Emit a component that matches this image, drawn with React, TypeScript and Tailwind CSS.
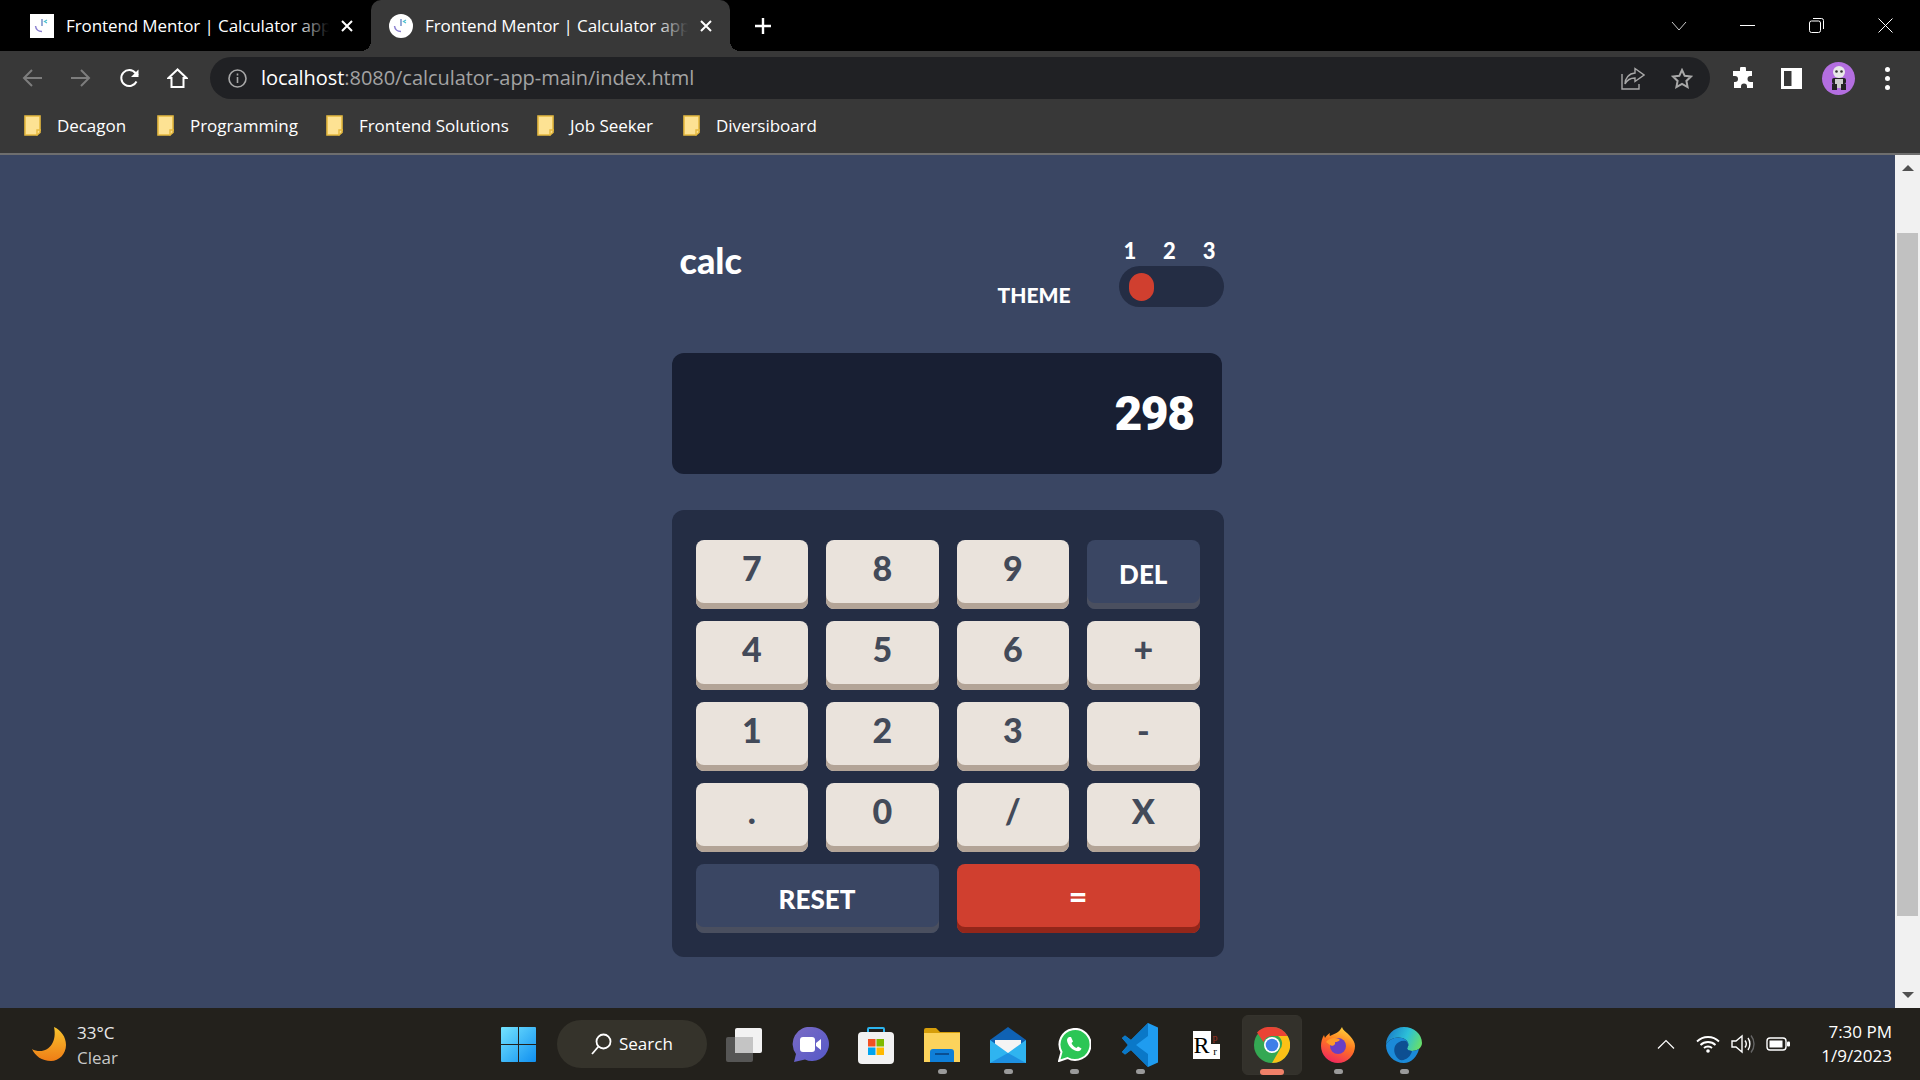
import { ReactNode } from "react";

const uiFont = "font-['Open_Sans','Noto_Sans',sans-serif]";
const calcFont = "font-['Lato',sans-serif]";

const keys = ["7", "8", "9", "DEL", "4", "5", "6", "+", "1", "2", "3", "-", ".", "0", "/", "X"];
const bookmarks = [
  { name: "Decagon", width: "w-[133px]" },
  { name: "Programming", width: "w-[169px]" },
  { name: "Frontend Solutions", width: "w-[211px]" },
  { name: "Job Seeker", width: "w-[146px]" },
  { name: "Diversiboard", width: "w-[160px]" },
];

function Favicon({ round }: { round?: boolean }) {
  return (
    <div className={`flex h-6 w-6 shrink-0 items-center justify-center bg-white ${round ? "rounded-full" : ""}`}>
      <svg width="18" height="18" viewBox="0 0 18 18" fill="none">
        <path d="M9 2v7" stroke="#5f7fc0" strokeWidth="1.3" />
        <path d="M14 3 11.500 4.500 14 6" stroke="#4cc0d0" strokeWidth="1.2" />
        <path d="M2.500 9c.5 3.500 3 5.500 6.500 5.500" stroke="#8a7fd0" strokeWidth="1.5" />
      </svg>
    </div>
  );
}

function Tab({ active }: { active?: boolean }) {
  return (
    <div className={`relative flex h-[51px] items-center ${active ? "w-[359px] rounded-t-[10px] bg-[#383838] pl-[18px]" : "w-[371px] pl-[30px]"}`}>
      {active && (
        <>
          <div className="absolute bottom-0 left-[-10px] h-2.5 w-2.5 bg-[radial-gradient(circle_at_0_0,#000_10px,#383838_10px)]" />
          <div className="absolute bottom-0 right-[-10px] h-2.5 w-2.5 bg-[radial-gradient(circle_at_100%_0,#000_10px,#383838_10px)]" />
        </>
      )}
      <Favicon round={active} />
      <div className="relative ml-3 w-[263px] overflow-hidden whitespace-nowrap text-[17px] tracking-[-0.1px] text-white">
        Frontend Mentor | Calculator app
        <div className={`absolute inset-y-0 right-0 w-8 bg-gradient-to-r from-transparent ${active ? "to-[#383838]" : "to-black"}`} />
      </div>
      <svg className="ml-[12px]" width="12" height="12" viewBox="0 0 12 12" stroke="white" strokeWidth="2">
        <path d="M1 1l10 10M11 1 1 11" />
      </svg>
    </div>
  );
}

function Folder() {
  return (
    <svg className="shrink-0" width="18" height="21" viewBox="0 0 18 21">
      <path d="M1 1h15v16.500l-3 2.500H1z" fill="#fde293" stroke="#e5b93f" strokeWidth="1.6" />
      <path d="M17 15h-4v5.500" fill="none" stroke="#e5b93f" strokeWidth="1.4" />
    </svg>
  );
}

function CalcKey({ label }: { label: string }) {
  const dark = label === "DEL";
  return (
    <button
      className={`flex h-[69px] justify-center rounded-lg font-black ${
        dark
          ? "items-center bg-[#3a4663] pt-1 pb-1 text-[26px] text-white shadow-[inset_0_-6px_0_#4a4f5f]"
          : "bg-[#eae3dc] pt-[4px] text-[34px] leading-[48px] text-[#434a59] shadow-[inset_0_-6px_0_#b3a497]"
      }`}
    >
      {label}
    </button>
  );
}

function TaskSlot({ children, dot, active }: { children: ReactNode; dot?: boolean; active?: boolean }) {
  return (
    <div className="relative flex h-full w-[66px] items-center justify-center pt-[2px]">
      {active && <div className="absolute inset-x-[3px] top-[7px] h-[60px] rounded-md border border-[#35332d] bg-[#33312b]" />}
      <div className="relative flex">{children}</div>
      {dot && <div className="absolute bottom-[6px] left-[28.500px] h-[5px] w-[9px] rounded-full bg-[#9a9a9a]" />}
      {active && <div className="absolute bottom-[5px] left-[21px] h-[6px] w-6 rounded-full bg-[#f08068]" />}
    </div>
  );
}

export default function App() {
  return (
    <div className={`flex h-screen w-full flex-col overflow-hidden bg-[#3a4663] ${uiFont}`}>
      {/* browser chrome */}
      <div className="flex h-[51px] shrink-0 items-center bg-black">
        <Tab />
        <Tab active />
        <svg className="ml-[24px]" width="18" height="18" viewBox="0 0 18 18" stroke="white" strokeWidth="2.400">
          <path d="M9 1v16M1 9h16" />
        </svg>
        <div className="ml-auto flex items-center">
          <svg width="16" height="10" viewBox="0 0 16 10" fill="none" stroke="#ccc" strokeWidth="1">
            <path d="M1 1l7 8 7-8" />
          </svg>
          <div className="ml-[53px] h-px w-[15px] bg-white" />
          <svg className="ml-[54px]" width="15" height="15" viewBox="0 0 15 15" fill="none" stroke="white" strokeWidth="1">
            <rect x="0.500" y="3" width="11" height="11.500" rx="2" />
            <path d="M4 .5h8.500a2 2 0 0 1 2 2V11" />
          </svg>
          <svg className="ml-[54px] mr-[27px]" width="15" height="15" viewBox="0 0 15 15" stroke="white" strokeWidth="1">
            <path d="M.5.5l14 14M14.500.5l-14 14" />
          </svg>
        </div>
      </div>

      <div className="flex h-[51px] shrink-0 items-center bg-[#383838] pt-[3px]">
        <div className="flex w-[210px] items-center pl-[22px]">
          <svg width="21" height="20" viewBox="0 0 21 20" fill="none" stroke="#7d7d7d" strokeWidth="2">
            <path d="M20 10H2M10 2l-8 8 8 8" />
          </svg>
          <svg className="ml-[27px]" width="21" height="20" viewBox="0 0 21 20" fill="none" stroke="#7d7d7d" strokeWidth="2">
            <path d="M1 10h18M11 2l8 8-8 8" />
          </svg>
          <svg className="ml-[28px]" width="21" height="21" viewBox="0 0 21 21" fill="none" stroke="white" strokeWidth="2">
            <path d="M17.500 13.500A8 8 0 1 1 16.500 5L19 7" />
            <path d="M19.500 1.500v7.500H12" fill="white" stroke="none" />
          </svg>
          <svg className="ml-[27px]" width="21" height="20" viewBox="0 0 21 20" fill="none" stroke="white" strokeWidth="2">
            <path d="M10.500 1.500 1.500 10H4.500v9h12v-9h3z" />
          </svg>
        </div>
        <div className="flex h-[42px] w-[1500px] items-center rounded-full bg-[#202124] pl-[18px]">
          <svg width="19" height="19" viewBox="0 0 19 19" fill="none" stroke="#a8a8a8" strokeWidth="1.600">
            <circle cx="9.500" cy="9.500" r="8.500" />
            <path d="M9.500 8v6M9.500 4.500v2" />
          </svg>
          <div className="ml-[14px] whitespace-nowrap text-[20px] tracking-[-0.05px] text-[#a3a3a3]">
            <span className="text-white">localhost</span>:8080/calculator-app-main/index.html
          </div>
          <svg className="ml-auto" width="24" height="23" viewBox="0 0 24 23" fill="none" stroke="#a8a8a8" strokeWidth="1.400">
            <path d="M1 7v15h17v-5" />
            <path d="M14 1.500 23 8l-9 6.500V11C9 11 6 13 4 17c0-6 4-10.500 10-11z" />
          </svg>
          <svg className="ml-[26px] mr-[17px]" width="22" height="21" viewBox="0 0 22 21" fill="none" stroke="#a8a8a8" strokeWidth="2">
            <path d="M11 2l2.700 5.800 6.300.8-4.600 4.300 1.200 6.200L11 16l-5.600 3.100 1.200-6.200L2 8.600l6.300-.8z" />
          </svg>
        </div>
        <svg className="ml-[22px]" width="22" height="22" viewBox="0 0 22 22" fill="white">
          <path d="M8 2a3 3 0 0 1 6 0v2h6v5h-1.500a3 3 0 0 0 0 6H21v6h-6v-1.500a3 3 0 0 0-6 0V21H2v-6h1a3 3 0 0 0 0-6H1V4h7z" />
        </svg>
        <svg className="ml-[27px]" width="21" height="21" viewBox="0 0 21 21" fill="none" stroke="white" strokeWidth="3">
          <rect x="1.500" y="1.500" width="18" height="18" />
          <path d="M15 1v19" strokeWidth="9" />
        </svg>
        <div className="ml-[20px] flex h-[33px] w-[33px] items-center justify-center rounded-full bg-[#b36ee0]">
          <svg width="20" height="26" viewBox="0 0 20 26">
            <circle cx="10" cy="7" r="6" fill="#e8e8e8" />
            <circle cx="7.500" cy="6.500" r="1.300" fill="#333" />
            <circle cx="12.500" cy="6.500" r="1.300" fill="#333" />
            <rect x="3" y="13" width="14" height="6" rx="2" fill="#222" />
            <rect x="6" y="14" width="8" height="9" fill="#ccc" />
            <rect x="3" y="19" width="5" height="6" fill="#222" />
            <rect x="12" y="19" width="5" height="6" fill="#222" />
          </svg>
        </div>
        <div className="ml-[30px] flex flex-col gap-[4px]">
          <div className="h-[5px] w-[5px] rounded-full bg-white" />
          <div className="h-[5px] w-[5px] rounded-full bg-white" />
          <div className="h-[5px] w-[5px] rounded-full bg-white" />
        </div>
      </div>

      <div className="flex h-[51px] shrink-0 items-center bg-[#383838] pb-[4px] pl-6">
        {bookmarks.map((b) => (
          <div key={b.name} className={`flex items-center ${b.width}`}>
            <Folder />
            <span className="ml-[15px] whitespace-nowrap text-[17px] tracking-[-0.05px] text-white">{b.name}</span>
          </div>
        ))}
      </div>
      <div className="h-0.5 shrink-0 bg-[#6e6e6e]" />

      {/* page */}
      <div className="flex min-h-0 flex-1">
        <main className={`min-w-0 flex-1 pt-[85px] ${calcFont}`}>
          <div className="mx-auto w-[552px]">
            <div className="flex items-start justify-between">
              <div className="ml-[8px] mt-[-4px] text-[36px] font-black leading-[48px] text-white">calc</div>
              <div className="flex items-end">
                <div className="mb-px mr-[48px] text-[21px] font-black leading-[22px] text-white">THEME</div>
                <div className="w-[105px]">
                  <div className="flex h-[26px] justify-between pl-[5px] pr-[8px] text-[22px] font-black leading-[22px] text-white">
                    <span>1</span>
                    <span>2</span>
                    <span>3</span>
                  </div>
                  <div className="flex h-[41px] items-center rounded-full bg-[#242d44] pl-2.5">
                    <div className="h-7 w-[25px] rounded-full bg-[#d03f2f]" />
                  </div>
                </div>
              </div>
            </div>

            <div className="mt-[46px] flex h-[121px] w-[550px] items-center justify-end rounded-[12px] bg-[#181f33] pr-7">
              <span className="font-['Roboto',sans-serif] text-[48px] font-black tracking-[-1.5px] text-white">298</span>
            </div>

            <div className="mt-9 rounded-[12px] bg-[#242d44] px-6 pb-6 pt-[30px]">
              <div className="grid grid-cols-4 gap-x-[18px] gap-y-3">
                {keys.map((k) => (
                  <CalcKey key={k} label={k} />
                ))}
                <button className="col-span-2 flex h-[69px] items-center justify-center rounded-lg bg-[#3a4663] pt-0.5 text-[26px] font-black text-white shadow-[inset_0_-6px_0_#4a4f5f]">
                  RESET
                </button>
                <button className="col-span-2 flex h-[69px] items-center justify-center rounded-lg bg-[#d03f2f] pb-1.5 text-[32px] font-black text-white shadow-[inset_0_-6px_0_#93261a]">
                  =
                </button>
              </div>
            </div>
          </div>
        </main>

        <div className="flex w-[25px] shrink-0 flex-col items-center bg-[#f1f1f1]">
          <div className="mt-[10px] h-0 w-0 border-x-[6px] border-b-[6px] border-x-transparent border-b-[#505050]" />
          <div className="mt-[62px] h-[683px] w-[21px] bg-[#c1c1c1]" />
          <div className="mt-[76px] h-0 w-0 border-x-[6px] border-t-[6px] border-x-transparent border-t-[#505050]" />
        </div>
      </div>

      {/* windows taskbar */}
      <div className="flex h-[72px] shrink-0 items-center bg-[#23211c]">
        <div className="flex w-[501px] items-center pl-8">
          <svg width="34" height="34" viewBox="0 0 34 34">
            <defs>
              <linearGradient id="moon" x1="0" y1="0" x2="0" y2="1">
                <stop offset="0" stopColor="#f8c42e" />
                <stop offset="1" stopColor="#ee7d16" />
              </linearGradient>
            </defs>
            <path d="M22 0c7 3 12 10 12 18 0 9-7 16-15 16C10 34 3 29 0 22c2 1.500 5 2 8 2 10 0 17-10 14-24z" fill="url(#moon)" />
          </svg>
          <div className="ml-[11px] pt-[2px] text-[17px] leading-[25px] text-[#e8e8e8]">
            <div>33°C</div>
            <div className="text-[#c8c8c8]">Clear</div>
          </div>
        </div>

        <svg width="35" height="35" viewBox="0 0 35 35">
          <defs>
            <linearGradient id="win" x1="0" y1="0" x2="1" y2="1">
              <stop offset="0" stopColor="#74e4ff" />
              <stop offset="1" stopColor="#0f8ff0" />
            </linearGradient>
          </defs>
          <path d="M0 1a1 1 0 0 1 1-1h16v17H0zM18 0h16a1 1 0 0 1 1 1v16H18zM0 18h17v17H1a1 1 0 0 1-1-1zM18 18h17v16a1 1 0 0 1-1 1H18z" fill="url(#win)" />
        </svg>

        <div className="ml-[21px] flex h-12 w-[150px] items-center rounded-full bg-[#35332b] pl-[34px] text-[17px] text-white">
          <svg width="21" height="22" viewBox="0 0 21 22" fill="none" stroke="white" strokeWidth="1.800">
            <circle cx="12.500" cy="8.500" r="7" />
            <path d="M7.500 13.500 1 21" />
          </svg>
          <span className="ml-[7px]">Search</span>
        </div>

        <div className="ml-1 flex h-full">
          <TaskSlot>
            <svg width="36" height="34" viewBox="0 0 36 34">
              <rect x="9" y="0" width="27" height="25" rx="2" fill="#f2f2f2" />
              <rect x="0" y="9" width="27" height="25" rx="2" fill="#5c5c5c" fillOpacity="0.9" />
              <rect x="9" y="9" width="18" height="16" fill="#c4c4c4" />
            </svg>
          </TaskSlot>
          <TaskSlot>
            <svg width="38" height="36" viewBox="0 0 38 36">
              <defs>
                <linearGradient id="chat" x1="0" y1="0" x2="1" y2="1">
                  <stop offset="0" stopColor="#7a6bc4" />
                  <stop offset="1" stopColor="#5558c8" />
                </linearGradient>
              </defs>
              <path d="M21 0a17 17 0 1 1-7 32.500L3 35l2-8A17 17 0 0 1 21 0z" fill="url(#chat)" />
              <rect x="9" y="10" width="15" height="15" rx="3" fill="white" />
              <path d="M25 16l5-4v11l-5-4z" fill="white" />
            </svg>
          </TaskSlot>
          <TaskSlot>
            <svg width="36" height="37" viewBox="0 0 36 37">
              <path d="M10 6V2a1 1 0 0 1 1-1h14a1 1 0 0 1 1 1v4" fill="none" stroke="#2bb4ee" strokeWidth="2" />
              <rect x="0" y="5" width="36" height="32" rx="4" fill="#f2f2f2" />
              <rect x="10" y="12" width="7.500" height="7.500" fill="#f25022" />
              <rect x="18.500" y="12" width="7.500" height="7.500" fill="#7fba00" />
              <rect x="10" y="20.500" width="7.500" height="7.500" fill="#00a4ef" />
              <rect x="18.500" y="20.500" width="7.500" height="7.500" fill="#ffb900" />
            </svg>
          </TaskSlot>
          <TaskSlot dot>
            <svg width="36" height="34" viewBox="0 0 36 34">
              <path d="M0 2a2 2 0 0 1 2-2h10l4 4h20v8H0z" fill="#d69e0a" />
              <path d="M0 5h36v29H0z" fill="#fcd35c" />
              <path d="M6 34V24a3 3 0 0 1 3-3h18a3 3 0 0 1 3 3v10z" fill="#0f7fd8" />
              <rect x="11" y="25" width="14" height="2" fill="#0a4f92" />
            </svg>
          </TaskSlot>
          <TaskSlot dot>
            <svg width="36" height="36" viewBox="0 0 36 36">
              <path d="M18 0 36 13v23H0V13z" fill="#0f62b4" />
              <path d="M5 13h26v6l-13 9L5 19z" fill="#f4f4f4" />
              <path d="M0 13l18 13 18-13v23H0z" fill="#2fb4f0" />
              <path d="M0 36l18-10 18 10z" fill="#1e90e0" />
            </svg>
          </TaskSlot>
          <TaskSlot dot>
            <svg width="33" height="34" viewBox="0 0 33 34">
              <path d="M1 33l2.500-9A15.500 15.500 0 1 1 9.500 30z" fill="#2bc655" stroke="white" strokeWidth="2" />
              <path d="M11 9c-2 1-2.500 3-1.500 5.500 1.500 4 5 7.500 9 8.500 2.500.5 4.500-.5 5-2.500l-3.500-2-1.500 1.500c-2-.5-4.500-3-5-5l1.500-1.500-2-4.500z" fill="white" />
            </svg>
          </TaskSlot>
          <TaskSlot dot>
            <svg width="36" height="44" viewBox="0 0 36 44">
              <path d="M26 0l10 4.500v35L26 44 9 27l-6 4.500L0 29l6-7-6-7 3-2.500L9 17z" fill="#1f9cf0" />
              <path d="M26 0v13L14 22l12 9v13L9 27l-6 4.500L0 29l6-7-6-7 3-2.500L9 17z" fill="#0a78c8" />
            </svg>
          </TaskSlot>
          <TaskSlot>
            <div className="flex items-start">
              <div className="flex h-7 w-[18px] items-center justify-center bg-white font-['Liberation_Serif',serif] text-[24px] leading-none text-black">
                R
              </div>
              <div className="flex w-[9px] flex-col items-center">
                <span className="h-[13px] font-['Liberation_Serif',serif] text-[10px] leading-[13px] text-[#a03020]">p</span>
                <div className="h-[15px] w-[9px] bg-white text-center font-['Liberation_Serif',serif] text-[11px] leading-[15px] text-black">r</div>
              </div>
            </div>
          </TaskSlot>
          <TaskSlot active>
            <svg width="36" height="36" viewBox="0 0 36 36">
              <circle cx="18" cy="18" r="18" fill="#34a853" />
              <path d="M18 0a18 18 0 0 1 15.600 9H18a9 9 0 0 0-8.500 6L3 5.500A18 18 0 0 1 18 0z" fill="#ea4335" />
              <path d="M33.600 9A18 18 0 0 1 18 36l7.800-13.500A9 9 0 0 0 24 9z" fill="#fbc116" />
              <circle cx="18" cy="18" r="8" fill="white" />
              <circle cx="18" cy="18" r="6.300" fill="#3f7fe8" />
            </svg>
          </TaskSlot>
          <TaskSlot dot>
            <svg width="34" height="36" viewBox="0 0 34 36">
              <defs>
                <linearGradient id="ff" x1="0.700" y1="0" x2="0.300" y2="1">
                  <stop offset="0" stopColor="#ffd53e" />
                  <stop offset="0.450" stopColor="#ff7a1f" />
                  <stop offset="1" stopColor="#f0245f" />
                </linearGradient>
              </defs>
              <path d="M21 0c1 4 5 5 8 9 3 3 5 7 5 10a17 17 0 0 1-34 0c0-4 1-8 3-11l1 3c1-2 3-4 5-5-1 2 0 3 0 3 4-2 9-3 12-9z" fill="url(#ff)" />
              <circle cx="17" cy="19" r="8" fill="#6a3fc4" />
              <path d="M5 15c3-4 9-5 13-3 2 1-1 3-4 3 1 3-3 5-5 3z" fill="#ff9a2a" />
            </svg>
          </TaskSlot>
          <TaskSlot dot>
            <svg width="36" height="36" viewBox="0 0 36 36">
              <defs>
                <linearGradient id="edge" x1="0" y1="0.300" x2="1" y2="0.600">
                  <stop offset="0" stopColor="#1a7cc8" />
                  <stop offset="0.550" stopColor="#2cc0d8" />
                  <stop offset="1" stopColor="#66de6c" />
                </linearGradient>
              </defs>
              <path d="M18 0c10 0 18 7 18 16 0 5-5 8-10 8-3 0-5-1-5-3 2-2 2-5-1-8C13 8 3 11 0 18 0 8 8 0 18 0z" fill="url(#edge)" />
              <path d="M0 18c3-7 13-10 20-5 3 3 3 6 1 8 0 2 2 3 5 3 2 0 5-1 7-2-2 8-8 14-15 14C8 36 0 28 0 18z" fill="#1b8ad8" />
              <path d="M14 33c-5-3-7-9-5-14 2-4 7-6 11-5 2 1 3 5 1 7 0 2 2 3 5 3-1 5-6 10-12 9z" fill="#0d4f92" />
            </svg>
          </TaskSlot>
        </div>

        <div className="ml-auto mr-[28px] flex items-center">
          <svg width="18" height="10" viewBox="0 0 18 10" fill="none" stroke="white" strokeWidth="1.200">
            <path d="M1 9.500l8-8 8 8" />
          </svg>
          <svg className="ml-[21px]" width="24" height="18" viewBox="0 0 24 18" fill="none" stroke="white" strokeWidth="1.800">
            <path d="M1 6.500c6-6 16-6 22 0M4.500 10c4-4 11-4 15 0M8 13c2-2 6-2 8 0" />
            <circle cx="12" cy="16" r="1.800" fill="white" stroke="none" />
          </svg>
          <svg className="ml-[11px]" width="24" height="20" viewBox="0 0 24 20" fill="none" stroke="white" strokeWidth="1.400">
            <path d="M1 7v6h4l6 5V2L5 7z" />
            <path d="M14 6.500c1.500 2 1.500 5 0 7M17 4c2.500 3.500 2.500 8.500 0 12" />
            <path d="M20 1.500c4 5 4 12 0 17" stroke="#666" />
          </svg>
          <svg className="ml-[11px]" width="24" height="14" viewBox="0 0 24 14" fill="none" stroke="white" strokeWidth="1.400">
            <rect x="1" y="1" width="19" height="12" rx="3" />
            <rect x="3.500" y="3.500" width="13" height="7" fill="white" stroke="none" />
            <rect x="21" y="4.500" width="3" height="5" rx="1" fill="white" stroke="none" />
          </svg>
          <div className="ml-[31px] text-right text-[17px] leading-6 text-white">
            <div>7:30 PM</div>
            <div>1/9/2023</div>
          </div>
        </div>
      </div>
    </div>
  );
}
